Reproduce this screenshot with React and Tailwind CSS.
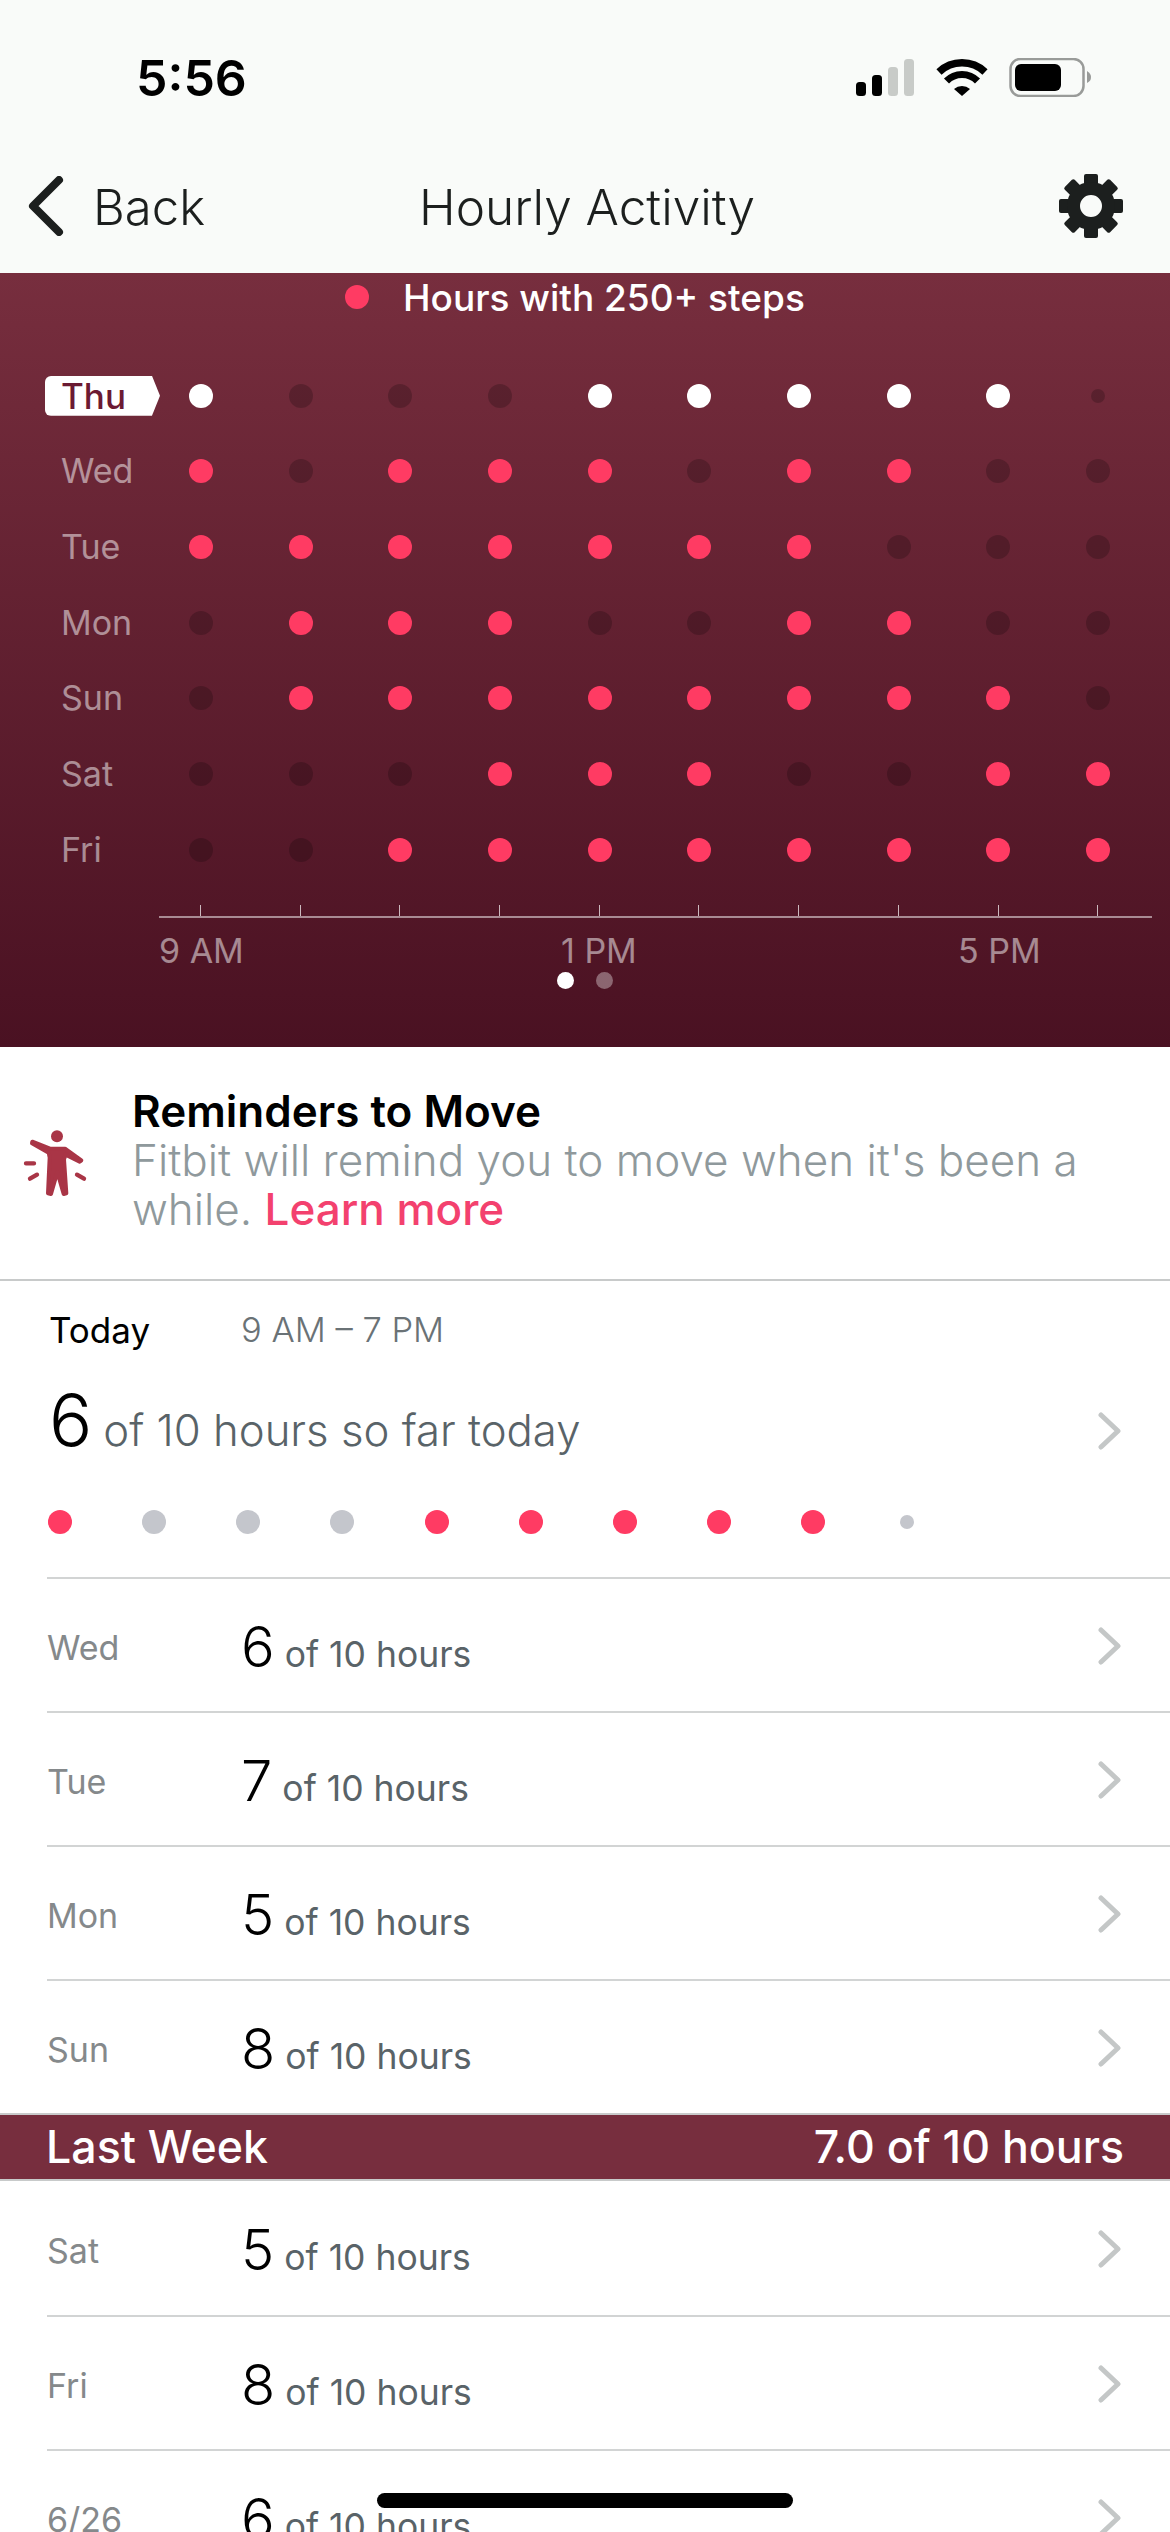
import React from 'react';

const FONT = 'font-["Inter","Noto_Sans",sans-serif]';

// w = white, r = red, d = dark, s = small dark
const chartRows = [
  { day: 'Thu', dots: 'wdddwwwwws' },
  { day: 'Wed', dots: 'rdrrrdrrdd' },
  { day: 'Tue', dots: 'rrrrrrrddd' },
  { day: 'Mon', dots: 'drrrddrrdd' },
  { day: 'Sun', dots: 'drrrrrrrrd' },
  { day: 'Sat', dots: 'dddrrrddrr' },
  { day: 'Fri', dots: 'ddrrrrrrrr' }
];

const todayDots = 'rgggrrrrrs';

const thisWeek = [
  { day: 'Wed', count: 6 },
  { day: 'Tue', count: 7 },
  { day: 'Mon', count: 5 },
  { day: 'Sun', count: 8 }
];

const lastWeek = [
  { day: 'Sat', count: 5 },
  { day: 'Fri', count: 8 },
  { day: '6/26', count: 6 }
];

const StatusIcons = () => <svg width="235" height="39" viewBox="0 0 235 39" className="mr-[79px]">
    <rect x="0" y="24" width="10" height="14" rx="3.5" fill="#000" />
    <rect x="16" y="17" width="10" height="21" rx="3.5" fill="#000" />
    <rect x="32" y="9" width="10" height="29" rx="3.5" fill="#c8cbc8" />
    <rect x="48" y="1" width="10" height="37" rx="3.5" fill="#c8cbc8" />
    <path d="M83 14 A33.5 33.5 0 0 1 129 14" fill="none" stroke="#000" strokeWidth="7.5" />
    <path d="M90.5 23 A21.5 21.5 0 0 1 121.5 23" fill="none" stroke="#000" strokeWidth="7" />
    <path d="M98 31 A12 12 0 0 1 114 31 L106 38 Z" fill="#000" />
    <rect x="154.5" y="1" width="73" height="37" rx="10" fill="none" stroke="#999b99" strokeWidth="2.5" />
    <rect x="159" y="6" width="46" height="27" rx="6" fill="#000" />
    <path d="M231 13 C234 15 235 17 235 19 C235 22 234 23 231 25 Z" fill="#999b99" />
  </svg>;

const Gear = () => <svg width="64" height="64" viewBox="0 0 64 64">
    {[0, 45, 90, 135, 180, 225, 270, 315].map(a => <rect key={a} x="25" y="0" width="14" height="14" rx="2" fill="#1c1f1e" transform={`rotate(${a} 32 32)`} />)}
    <circle cx="32" cy="32" r="17.5" fill="none" stroke="#1c1f1e" strokeWidth="13" />
  </svg>;

const MoveIcon = () => <svg width="70" height="74" viewBox="60 230 210 222" className="shrink-0">
    <circle cx="171" cy="261" r="18" fill="#a93546" />
    <path d="M97 277 L150 298 L195 298 L244 333 L239 337 L197 316 L192 330 L199 432 L191 434 L172 368 L153 434 L144 432 L149 325 L146 310 L96 282 Z" fill="#a93546" stroke="#a93546" strokeWidth="12" strokeLinejoin="round" />
    <path d="M78 342 L102 342 M90 388 L111 376 M231 376 L252 388" stroke="#a93546" strokeWidth="13" strokeLinecap="round" fill="none" />
  </svg>;

const Chevron = () => <svg width="24" height="38" viewBox="0 0 24 38" className="shrink-0">
    <path d="M3 3 L20 19 L3 35" fill="none" stroke="#c4c7c7" strokeWidth="5" strokeLinecap="round" strokeLinejoin="round" />
  </svg>;

const ChartDot = ({
  type
}) => {
  if (type === 'w') return <span className="w-6 h-6 rounded-full bg-white" />;
  if (type === 'r') return <span className="w-6 h-6 rounded-full bg-[#ff3b63]" />;
  if (type === 's') return <span className="w-3.5 h-3.5 rounded-full bg-black/20" />;
  return <span className="w-6 h-6 rounded-full bg-black/20" />;
};

const TodayDot = ({
  type
}) => {
  if (type === 'r') return <span className="w-6 h-6 rounded-full bg-[#ff3b63]" />;
  if (type === 's') return <span className="w-3.5 h-3.5 rounded-full bg-[#c4c6cc]" />;
  return <span className="w-6 h-6 rounded-full bg-[#c4c6cc]" />;
};

const DayRow = ({
  day,
  count
}) => <div className="h-[134px] ml-[47px] flex items-center border-t-2 border-[#d2d4d4]">
    <span className="w-[194px] text-[34px] text-[#85898b] mt-[4px]">{day}</span>
    <span className="flex-1 flex items-baseline mt-[10px]">
      <span className="text-[56px] font-light text-black leading-none">{count}</span>
      <span className="ml-[10px] text-[35.5px] text-[#596368]">of 10 hours</span>
    </span>
    <span className="mr-[48px] mt-[2px]"><Chevron /></span>
  </div>;

const App = () => {
  return <div className={`relative w-[1170px] h-[2532px] overflow-hidden bg-white ${FONT}`}>
      {/* top bar */}
      <div className="h-[273px] bg-[#f9fbf9]">
        <div className="pt-[58px] h-[97px] flex items-center justify-between">
          <span className="ml-[136px] text-[50px] font-semibold text-black leading-none">5:56</span>
          <StatusIcons />
        </div>
        <div className="mt-[77px] h-[64px] flex items-center justify-between relative">
          <div className="flex items-center ml-[28px]">
            <svg width="36" height="60" viewBox="0 0 36 60">
              <path d="M31 4 L5 30 L31 56" fill="none" stroke="#1c1f1e" strokeWidth="8" strokeLinecap="round" strokeLinejoin="round" />
            </svg>
            <span className="ml-[29px] mt-[2px] text-[49px] font-light text-[#1c1f1e] leading-none">Back</span>
          </div>
          <span className="absolute left-[419px] top-[1px] text-[49.5px] font-light text-[#1c1f1e] leading-[64px]">Hourly Activity</span>
          <span className="mr-[47px]"><Gear /></span>
        </div>
      </div>

      {/* chart */}
      <div className="h-[774px] bg-gradient-to-b from-[#772e3e] to-[#4a1122]">
        <div className="h-[48px] flex items-center pl-[345px]">
          <span className="w-6 h-6 rounded-full bg-[#ff3b63]" />
          <span className="ml-[34px] text-[37px] font-medium text-white leading-none">Hours with 250+ steps</span>
        </div>
        <div className="mt-[37px]">
          {chartRows.map((row, i) => <div key={row.day} className="h-[75.67px] flex items-center">
              <div className="w-[151px] shrink-0 pl-[45px]">
                {i === 0 ? <span className="block w-[115px] h-[40px] bg-white rounded-l-md text-[#6b1a32] text-[35px] font-medium leading-[40px] pl-[16px] [clip-path:polygon(0_0,93%_0,100%_50%,93%_100%,0_100%)]">{row.day}</span> : <span className="block pl-[16px] text-[34px] text-white/50 leading-none">{row.day}</span>}
              </div>
              <div className="flex">
                {row.dots.split('').map((d, j) => <div key={j} className="w-[99.7px] flex justify-center items-center"><ChartDot type={d} /></div>)}
              </div>
            </div>)}
        </div>
        {/* axis */}
        <div className="ml-[159px] w-[993px] h-[13px] mt-[17px] flex items-stretch border-b-2 border-white/50 pl-[41px]">
          {[0, 1, 2, 3, 4, 5, 6, 7, 8, 9].map(t => <div key={t} className="w-[99.7px] shrink-0"><div className="w-px h-full bg-white/70" /></div>)}
        </div>
        <div className="ml-[159px] mt-[12px] h-[42px] flex text-[34px] text-white/50 leading-[42px]">
          <span className="w-[402px]">9 AM</span>
          <span className="w-[397px]">1 PM</span>
          <span>5 PM</span>
        </div>
        <div className="flex justify-center gap-[22px]">
          <span className="w-[17px] h-[17px] rounded-full bg-white" />
          <span className="w-[17px] h-[17px] rounded-full bg-white/35" />
        </div>
      </div>

      {/* reminders */}
      <div className="h-[234px] flex items-center pl-[20px] border-b-2 border-[#c8caca]">
        <MoveIcon />
        <div className="ml-[42px] -mt-[6px]">
          <div className="text-[44px] font-semibold text-black leading-[49px]">Reminders to Move</div>
          <div className="text-[44px] font-light text-[#8f999c] leading-[49px]">
            Fitbit will remind you to move when it's been a while. <span className="font-medium text-[#f3416e]">Learn more</span>
          </div>
        </div>
      </div>

      {/* today */}
      <div className="h-[296px]">
        <div className="flex items-center pt-[28px] h-[70px]">
          <span className="ml-[49px] w-[192px] text-[35px] text-black leading-none">Today</span>
          <span className="text-[34.5px] font-light text-[#6a7276] leading-none">9 AM – 7 PM</span>
        </div>
        <div className="flex items-baseline ml-[49px] mt-[34px] h-[70px]">
          <span className="text-[72px] font-light text-black leading-[70px]">6</span>
          <span className="ml-[11px] flex-1 text-[43.7px] font-light text-[#596368] leading-none">of 10 hours so far today</span>
          <span className="mr-[48px] self-center mt-[22px]"><Chevron /></span>
        </div>
        <div className="mt-[55px] ml-[13px] flex items-center h-6">
          {todayDots.split('').map((d, i) => <div key={i} className="w-[94.14px] flex justify-center items-center"><TodayDot type={d} /></div>)}
        </div>
      </div>

      {thisWeek.map(row => <DayRow key={row.day} {...row} />)}

      <div className="h-[68px] flex items-center justify-between pl-[46px] pr-[46px] bg-[#772e3e] border-y-2 border-[#c8caca] text-[44.7px] font-medium text-white leading-none">
        <span>Last Week</span>
        <span>7.0 of 10 hours</span>
      </div>

      {lastWeek.map((row, i) => <div key={row.day} className={i === 0 ? '[&>div]:border-t-0' : ''}><DayRow {...row} /></div>)}

      {/* home indicator */}
      <div className="absolute left-[377px] top-[2493px] w-[416px] h-[15px] rounded-full bg-black" />
    </div>;
};
export default App;
